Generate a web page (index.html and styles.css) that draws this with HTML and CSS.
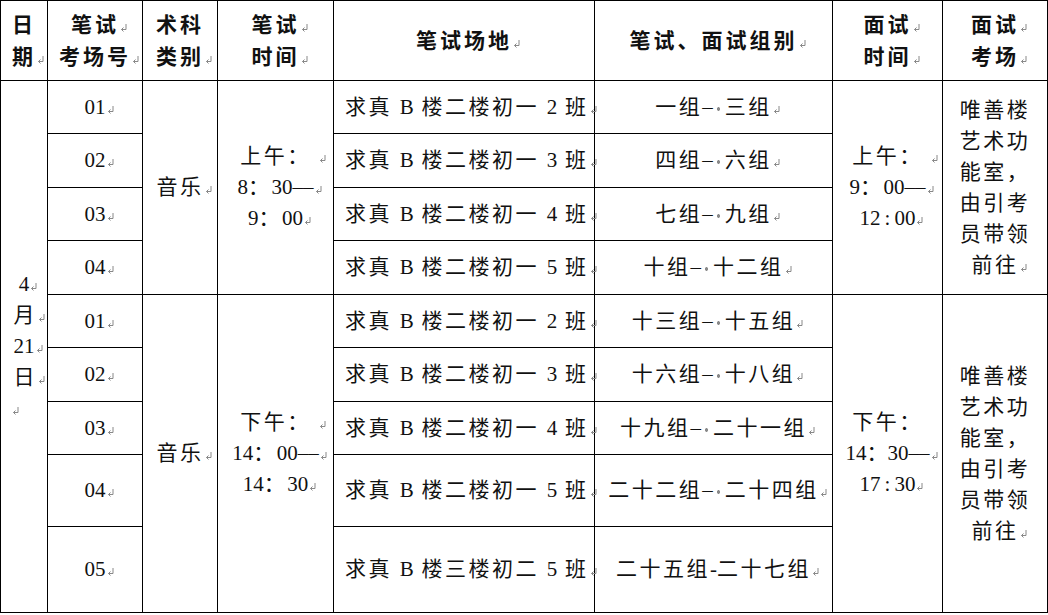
FILE: index.html
```html
<!DOCTYPE html>
<html lang="zh-CN">
<head>
<meta charset="utf-8">
<title>考场安排</title>
<link rel="stylesheet" href="styles.css">
</head>
<body>
<table class="sched">
  <colgroup>
    <col class="c1"><col class="c2"><col class="c3"><col class="c4"><col class="c5"><col class="c6"><col class="c7"><col class="c8">
  </colgroup>
  <thead>
    <tr class="rh">
      <th><div>日</div><div>期<span class="pm"><svg viewBox="0 0 7 9" width="7" height="9"><path d="M6 1V6.5H1.5M3.5 4.5L1.5 6.5L3.5 8.5" fill="none" stroke="#888" stroke-width="1"/></svg></span></div></th>
      <th><div>笔试<span class="pm"><svg viewBox="0 0 7 9" width="7" height="9"><path d="M6 1V6.5H1.5M3.5 4.5L1.5 6.5L3.5 8.5" fill="none" stroke="#888" stroke-width="1"/></svg></span></div><div>考场号<span class="pm"><svg viewBox="0 0 7 9" width="7" height="9"><path d="M6 1V6.5H1.5M3.5 4.5L1.5 6.5L3.5 8.5" fill="none" stroke="#888" stroke-width="1"/></svg></span></div></th>
      <th><div>术科</div><div>类别<span class="pm"><svg viewBox="0 0 7 9" width="7" height="9"><path d="M6 1V6.5H1.5M3.5 4.5L1.5 6.5L3.5 8.5" fill="none" stroke="#888" stroke-width="1"/></svg></span></div></th>
      <th><div>笔试<span class="pm"><svg viewBox="0 0 7 9" width="7" height="9"><path d="M6 1V6.5H1.5M3.5 4.5L1.5 6.5L3.5 8.5" fill="none" stroke="#888" stroke-width="1"/></svg></span></div><div>时间<span class="pm"><svg viewBox="0 0 7 9" width="7" height="9"><path d="M6 1V6.5H1.5M3.5 4.5L1.5 6.5L3.5 8.5" fill="none" stroke="#888" stroke-width="1"/></svg></span></div></th>
      <th><div>笔试场地<span class="pm"><svg viewBox="0 0 7 9" width="7" height="9"><path d="M6 1V6.5H1.5M3.5 4.5L1.5 6.5L3.5 8.5" fill="none" stroke="#888" stroke-width="1"/></svg></span></div></th>
      <th><div>笔试、面试组别<span class="pm"><svg viewBox="0 0 7 9" width="7" height="9"><path d="M6 1V6.5H1.5M3.5 4.5L1.5 6.5L3.5 8.5" fill="none" stroke="#888" stroke-width="1"/></svg></span></div></th>
      <th><div>面试<span class="pm"><svg viewBox="0 0 7 9" width="7" height="9"><path d="M6 1V6.5H1.5M3.5 4.5L1.5 6.5L3.5 8.5" fill="none" stroke="#888" stroke-width="1"/></svg></span></div><div>时间<span class="pm"><svg viewBox="0 0 7 9" width="7" height="9"><path d="M6 1V6.5H1.5M3.5 4.5L1.5 6.5L3.5 8.5" fill="none" stroke="#888" stroke-width="1"/></svg></span></div></th>
      <th><div>面试<span class="pm"><svg viewBox="0 0 7 9" width="7" height="9"><path d="M6 1V6.5H1.5M3.5 4.5L1.5 6.5L3.5 8.5" fill="none" stroke="#888" stroke-width="1"/></svg></span></div><div>考场<span class="pm"><svg viewBox="0 0 7 9" width="7" height="9"><path d="M6 1V6.5H1.5M3.5 4.5L1.5 6.5L3.5 8.5" fill="none" stroke="#888" stroke-width="1"/></svg></span></div></th>
    </tr>
  </thead>
  <tbody>
    <tr class="r53">
      <td rowspan="9" class="date">
        <div><span class="n">4</span><span class="pm"><svg viewBox="0 0 7 9" width="7" height="9"><path d="M6 1V6.5H1.5M3.5 4.5L1.5 6.5L3.5 8.5" fill="none" stroke="#888" stroke-width="1"/></svg></span></div>
        <div>月<span class="pm gap"><svg viewBox="0 0 7 9" width="7" height="9"><path d="M6 1V6.5H1.5M3.5 4.5L1.5 6.5L3.5 8.5" fill="none" stroke="#888" stroke-width="1"/></svg></span></div>
        <div><span class="n">21</span><span class="pm"><svg viewBox="0 0 7 9" width="7" height="9"><path d="M6 1V6.5H1.5M3.5 4.5L1.5 6.5L3.5 8.5" fill="none" stroke="#888" stroke-width="1"/></svg></span></div>
        <div>日<span class="pm gap"><svg viewBox="0 0 7 9" width="7" height="9"><path d="M6 1V6.5H1.5M3.5 4.5L1.5 6.5L3.5 8.5" fill="none" stroke="#888" stroke-width="1"/></svg></span></div>
        <div class="empty"><svg viewBox="0 0 7 9" width="7" height="9"><path d="M6 1V6.5H1.5M3.5 4.5L1.5 6.5L3.5 8.5" fill="none" stroke="#888" stroke-width="1"/></svg></div>
      </td>
      <td class="num">01<span class="pm"><svg viewBox="0 0 7 9" width="7" height="9"><path d="M6 1V6.5H1.5M3.5 4.5L1.5 6.5L3.5 8.5" fill="none" stroke="#888" stroke-width="1"/></svg></span></td>
      <td rowspan="4">音乐<span class="pm"><svg viewBox="0 0 7 9" width="7" height="9"><path d="M6 1V6.5H1.5M3.5 4.5L1.5 6.5L3.5 8.5" fill="none" stroke="#888" stroke-width="1"/></svg></span></td>
      <td rowspan="4" class="time">
        <div>上午：<span class="pm wide"><svg viewBox="0 0 7 9" width="7" height="9"><path d="M6 1V6.5H1.5M3.5 4.5L1.5 6.5L3.5 8.5" fill="none" stroke="#888" stroke-width="1"/></svg></span></div>
        <div><span class="n">8</span>：<span class="n">30––</span><span class="pm"><svg viewBox="0 0 7 9" width="7" height="9"><path d="M6 1V6.5H1.5M3.5 4.5L1.5 6.5L3.5 8.5" fill="none" stroke="#888" stroke-width="1"/></svg></span></div>
        <div><span class="n">9</span>：<span class="n">00</span><span class="pm"><svg viewBox="0 0 7 9" width="7" height="9"><path d="M6 1V6.5H1.5M3.5 4.5L1.5 6.5L3.5 8.5" fill="none" stroke="#888" stroke-width="1"/></svg></span></div>
      </td>
      <td class="place">求真 <span class="n">B</span> 楼二楼初一 <span class="n">2</span> 班<span class="pm"><svg viewBox="0 0 7 9" width="7" height="9"><path d="M6 1V6.5H1.5M3.5 4.5L1.5 6.5L3.5 8.5" fill="none" stroke="#888" stroke-width="1"/></svg></span></td>
      <td class="grp">一组<span class="n">–</span><span class="sp"></span>三组<span class="pm"><svg viewBox="0 0 7 9" width="7" height="9"><path d="M6 1V6.5H1.5M3.5 4.5L1.5 6.5L3.5 8.5" fill="none" stroke="#888" stroke-width="1"/></svg></span></td>
      <td rowspan="4" class="time">
        <div>上午：<span class="pm wide"><svg viewBox="0 0 7 9" width="7" height="9"><path d="M6 1V6.5H1.5M3.5 4.5L1.5 6.5L3.5 8.5" fill="none" stroke="#888" stroke-width="1"/></svg></span></div>
        <div><span class="n">9</span>：<span class="n">00––</span><span class="pm"><svg viewBox="0 0 7 9" width="7" height="9"><path d="M6 1V6.5H1.5M3.5 4.5L1.5 6.5L3.5 8.5" fill="none" stroke="#888" stroke-width="1"/></svg></span></div>
        <div><span class="n">12<span class="hc">:</span>00</span><span class="pm"><svg viewBox="0 0 7 9" width="7" height="9"><path d="M6 1V6.5H1.5M3.5 4.5L1.5 6.5L3.5 8.5" fill="none" stroke="#888" stroke-width="1"/></svg></span></div>
      </td>
      <td rowspan="4" class="room">唯善楼<br>艺术功<br>能室，<br>由引考<br>员带领<br>前往<span class="pm"><svg viewBox="0 0 7 9" width="7" height="9"><path d="M6 1V6.5H1.5M3.5 4.5L1.5 6.5L3.5 8.5" fill="none" stroke="#888" stroke-width="1"/></svg></span></td>
    </tr>
    <tr class="r54">
      <td class="num">02<span class="pm"><svg viewBox="0 0 7 9" width="7" height="9"><path d="M6 1V6.5H1.5M3.5 4.5L1.5 6.5L3.5 8.5" fill="none" stroke="#888" stroke-width="1"/></svg></span></td>
      <td class="place">求真 <span class="n">B</span> 楼二楼初一 <span class="n">3</span> 班<span class="pm"><svg viewBox="0 0 7 9" width="7" height="9"><path d="M6 1V6.5H1.5M3.5 4.5L1.5 6.5L3.5 8.5" fill="none" stroke="#888" stroke-width="1"/></svg></span></td>
      <td class="grp">四组<span class="n">–</span><span class="sp"></span>六组<span class="pm"><svg viewBox="0 0 7 9" width="7" height="9"><path d="M6 1V6.5H1.5M3.5 4.5L1.5 6.5L3.5 8.5" fill="none" stroke="#888" stroke-width="1"/></svg></span></td>
    </tr>
    <tr class="r53">
      <td class="num">03<span class="pm"><svg viewBox="0 0 7 9" width="7" height="9"><path d="M6 1V6.5H1.5M3.5 4.5L1.5 6.5L3.5 8.5" fill="none" stroke="#888" stroke-width="1"/></svg></span></td>
      <td class="place">求真 <span class="n">B</span> 楼二楼初一 <span class="n">4</span> 班<span class="pm"><svg viewBox="0 0 7 9" width="7" height="9"><path d="M6 1V6.5H1.5M3.5 4.5L1.5 6.5L3.5 8.5" fill="none" stroke="#888" stroke-width="1"/></svg></span></td>
      <td class="grp">七组<span class="n">–</span><span class="sp"></span>九组<span class="pm"><svg viewBox="0 0 7 9" width="7" height="9"><path d="M6 1V6.5H1.5M3.5 4.5L1.5 6.5L3.5 8.5" fill="none" stroke="#888" stroke-width="1"/></svg></span></td>
    </tr>
    <tr class="r54">
      <td class="num">04<span class="pm"><svg viewBox="0 0 7 9" width="7" height="9"><path d="M6 1V6.5H1.5M3.5 4.5L1.5 6.5L3.5 8.5" fill="none" stroke="#888" stroke-width="1"/></svg></span></td>
      <td class="place">求真 <span class="n">B</span> 楼二楼初一 <span class="n">5</span> 班<span class="pm"><svg viewBox="0 0 7 9" width="7" height="9"><path d="M6 1V6.5H1.5M3.5 4.5L1.5 6.5L3.5 8.5" fill="none" stroke="#888" stroke-width="1"/></svg></span></td>
      <td class="grp">十组<span class="n">–</span><span class="sp"></span>十二组<span class="pm"><svg viewBox="0 0 7 9" width="7" height="9"><path d="M6 1V6.5H1.5M3.5 4.5L1.5 6.5L3.5 8.5" fill="none" stroke="#888" stroke-width="1"/></svg></span></td>
    </tr>
    <tr class="r53">
      <td class="num">01<span class="pm"><svg viewBox="0 0 7 9" width="7" height="9"><path d="M6 1V6.5H1.5M3.5 4.5L1.5 6.5L3.5 8.5" fill="none" stroke="#888" stroke-width="1"/></svg></span></td>
      <td rowspan="5">音乐<span class="pm"><svg viewBox="0 0 7 9" width="7" height="9"><path d="M6 1V6.5H1.5M3.5 4.5L1.5 6.5L3.5 8.5" fill="none" stroke="#888" stroke-width="1"/></svg></span></td>
      <td rowspan="5" class="time">
        <div>下午：<span class="pm wide"><svg viewBox="0 0 7 9" width="7" height="9"><path d="M6 1V6.5H1.5M3.5 4.5L1.5 6.5L3.5 8.5" fill="none" stroke="#888" stroke-width="1"/></svg></span></div>
        <div><span class="n">14</span>：<span class="n">00––</span><span class="pm"><svg viewBox="0 0 7 9" width="7" height="9"><path d="M6 1V6.5H1.5M3.5 4.5L1.5 6.5L3.5 8.5" fill="none" stroke="#888" stroke-width="1"/></svg></span></div>
        <div><span class="n">14</span>：<span class="n">30</span><span class="pm"><svg viewBox="0 0 7 9" width="7" height="9"><path d="M6 1V6.5H1.5M3.5 4.5L1.5 6.5L3.5 8.5" fill="none" stroke="#888" stroke-width="1"/></svg></span></div>
      </td>
      <td class="place">求真 <span class="n">B</span> 楼二楼初一 <span class="n">2</span> 班<span class="pm"><svg viewBox="0 0 7 9" width="7" height="9"><path d="M6 1V6.5H1.5M3.5 4.5L1.5 6.5L3.5 8.5" fill="none" stroke="#888" stroke-width="1"/></svg></span></td>
      <td class="grp">十三组<span class="n">–</span><span class="sp"></span>十五组<span class="pm"><svg viewBox="0 0 7 9" width="7" height="9"><path d="M6 1V6.5H1.5M3.5 4.5L1.5 6.5L3.5 8.5" fill="none" stroke="#888" stroke-width="1"/></svg></span></td>
      <td rowspan="5" class="time">
        <div>下午：</div>
        <div><span class="n">14</span><span class="nc">：</span><span class="n">30––</span><span class="pm"><svg viewBox="0 0 7 9" width="7" height="9"><path d="M6 1V6.5H1.5M3.5 4.5L1.5 6.5L3.5 8.5" fill="none" stroke="#888" stroke-width="1"/></svg></span></div>
        <div><span class="n">17<span class="hc">:</span>30</span><span class="pm"><svg viewBox="0 0 7 9" width="7" height="9"><path d="M6 1V6.5H1.5M3.5 4.5L1.5 6.5L3.5 8.5" fill="none" stroke="#888" stroke-width="1"/></svg></span></div>
      </td>
      <td rowspan="5" class="room">唯善楼<br>艺术功<br>能室，<br>由引考<br>员带领<br>前往<span class="pm"><svg viewBox="0 0 7 9" width="7" height="9"><path d="M6 1V6.5H1.5M3.5 4.5L1.5 6.5L3.5 8.5" fill="none" stroke="#888" stroke-width="1"/></svg></span></td>
    </tr>
    <tr class="r54">
      <td class="num">02<span class="pm"><svg viewBox="0 0 7 9" width="7" height="9"><path d="M6 1V6.5H1.5M3.5 4.5L1.5 6.5L3.5 8.5" fill="none" stroke="#888" stroke-width="1"/></svg></span></td>
      <td class="place">求真 <span class="n">B</span> 楼二楼初一 <span class="n">3</span> 班<span class="pm"><svg viewBox="0 0 7 9" width="7" height="9"><path d="M6 1V6.5H1.5M3.5 4.5L1.5 6.5L3.5 8.5" fill="none" stroke="#888" stroke-width="1"/></svg></span></td>
      <td class="grp">十六组<span class="n">–</span><span class="sp"></span>十八组<span class="pm"><svg viewBox="0 0 7 9" width="7" height="9"><path d="M6 1V6.5H1.5M3.5 4.5L1.5 6.5L3.5 8.5" fill="none" stroke="#888" stroke-width="1"/></svg></span></td>
    </tr>
    <tr class="r53">
      <td class="num">03<span class="pm"><svg viewBox="0 0 7 9" width="7" height="9"><path d="M6 1V6.5H1.5M3.5 4.5L1.5 6.5L3.5 8.5" fill="none" stroke="#888" stroke-width="1"/></svg></span></td>
      <td class="place">求真 <span class="n">B</span> 楼二楼初一 <span class="n">4</span> 班<span class="pm"><svg viewBox="0 0 7 9" width="7" height="9"><path d="M6 1V6.5H1.5M3.5 4.5L1.5 6.5L3.5 8.5" fill="none" stroke="#888" stroke-width="1"/></svg></span></td>
      <td class="grp">十九组<span class="n">–</span><span class="sp"></span>二十一组<span class="pm"><svg viewBox="0 0 7 9" width="7" height="9"><path d="M6 1V6.5H1.5M3.5 4.5L1.5 6.5L3.5 8.5" fill="none" stroke="#888" stroke-width="1"/></svg></span></td>
    </tr>
    <tr class="r72">
      <td class="num">04<span class="pm"><svg viewBox="0 0 7 9" width="7" height="9"><path d="M6 1V6.5H1.5M3.5 4.5L1.5 6.5L3.5 8.5" fill="none" stroke="#888" stroke-width="1"/></svg></span></td>
      <td class="place">求真 <span class="n">B</span> 楼二楼初一 <span class="n">5</span> 班<span class="pm"><svg viewBox="0 0 7 9" width="7" height="9"><path d="M6 1V6.5H1.5M3.5 4.5L1.5 6.5L3.5 8.5" fill="none" stroke="#888" stroke-width="1"/></svg></span></td>
      <td class="grp">二十二组<span class="n">–</span><span class="sp"></span>二十四组<span class="pm"><svg viewBox="0 0 7 9" width="7" height="9"><path d="M6 1V6.5H1.5M3.5 4.5L1.5 6.5L3.5 8.5" fill="none" stroke="#888" stroke-width="1"/></svg></span></td>
    </tr>
    <tr class="r86">
      <td class="num">05<span class="pm"><svg viewBox="0 0 7 9" width="7" height="9"><path d="M6 1V6.5H1.5M3.5 4.5L1.5 6.5L3.5 8.5" fill="none" stroke="#888" stroke-width="1"/></svg></span></td>
      <td class="place">求真 <span class="n">B</span> 楼三楼初二 <span class="n">5</span> 班<span class="pm"><svg viewBox="0 0 7 9" width="7" height="9"><path d="M6 1V6.5H1.5M3.5 4.5L1.5 6.5L3.5 8.5" fill="none" stroke="#888" stroke-width="1"/></svg></span></td>
      <td class="grp">二十五组<span class="n">-</span>二十七组<span class="pm"><svg viewBox="0 0 7 9" width="7" height="9"><path d="M6 1V6.5H1.5M3.5 4.5L1.5 6.5L3.5 8.5" fill="none" stroke="#888" stroke-width="1"/></svg></span></td>
    </tr>
  </tbody>
</table>
</body>
</html>
```

FILE: styles.css
```css
html, body {
  margin: 0;
  padding: 0;
  background: #ffffff;
}

.sched {
  border-collapse: collapse;
  table-layout: fixed;
  width: 1048px;
  font-family: "Liberation Serif", "Noto Sans CJK SC", serif;
  font-size: 21px;
  color: #111111;
}

.c1 { width: 47px; }
.c2 { width: 95px; }
.c3 { width: 75px; }
.c4 { width: 116px; }
.c5 { width: 261px; }
.c6 { width: 238px; }
.c7 { width: 110px; }
.c8 { width: 105px; }

.sched th,
.sched td {
  border: 1px solid #000000;
  padding: 0;
  text-align: center;
  vertical-align: middle;
  white-space: nowrap;
  line-height: 31px;
  letter-spacing: 2.5px;
  overflow: visible;
}

.sched th {
  font-weight: bold;
  line-height: 32px;
  letter-spacing: 3px;
}

.rh { height: 80px; }
.r53 { height: 53px; }
.r54 { height: 54px; }
.r72 { height: 72px; }
.r86 { height: 86px; }

.sched .n {
  letter-spacing: 0;
}

.sched td.num {
  letter-spacing: 0;
}

.sched td.date {
  letter-spacing: 0;
}

.sched td.date .empty {
  text-align: left;
  padding-left: 11px;
  line-height: 31px;
}

.sched td.place {
  text-align: left;
  padding-left: 11px;
}

.sched .sp {
  display: inline-block;
  width: 11px;
  height: 4px;
  vertical-align: middle;
  background: radial-gradient(circle at 50% 50%, #8a8a8a 1.5px, rgba(138, 138, 138, 0) 2px);
  letter-spacing: 0;
  margin-right: 1px;
}

.sched .hc {
  margin: 0 4px;
}

.sched .nc {
  letter-spacing: 0;
}

.sched .pm {
  display: inline-block;
  width: 0;
  letter-spacing: 0;
  vertical-align: baseline;
}

.pm svg {
  display: block;
  margin-left: 1px;
}

.pm.gap svg {
  margin-left: 3px;
}

.pm.wide svg {
  margin-left: 8px;
}

.empty svg {
  display: inline-block;
  vertical-align: baseline;
}
```
